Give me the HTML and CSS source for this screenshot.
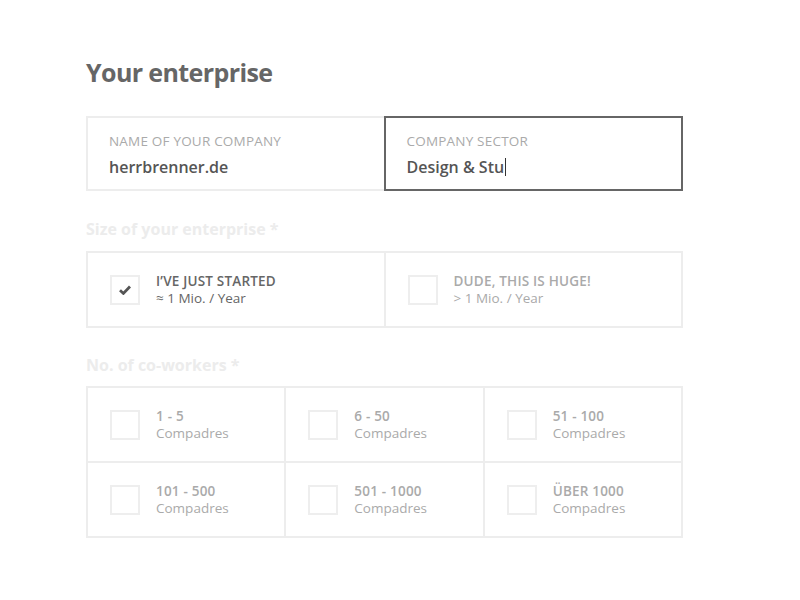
FILE: index.html
```html
<!DOCTYPE html>
<html lang="en">
<head>
  <meta charset="UTF-8">
  <meta name="viewport" content="width=device-width, initial-scale=1.0">
  <title>Your enterprise</title>
  <link rel="stylesheet" href="styles.css">
</head>
<body>
  <div class="form">
    <h1 class="title">Your enterprise</h1>

    <div class="row inputs">
      <div class="field">
        <div class="label">NAME OF YOUR COMPANY</div>
        <div class="value">herrbrenner.de</div>
      </div>
      <div class="field focused">
        <div class="label">COMPANY SECTOR</div>
        <div class="value">Design &amp; Stu<span class="caret"></span></div>
      </div>
    </div>

    <h2 class="section">Size of your enterprise *</h2>
    <div class="row size">
      <div class="option checked">
        <span class="box">
          <svg width="12" height="10" viewBox="0 0 12 10"><path d="M1 5.2 L4.4 8.4 L11 1.6" fill="none" stroke="#555" stroke-width="2.8"/></svg>
        </span>
        <div class="text">
          <div class="name">I’VE JUST STARTED</div>
          <div class="sub">≈ 1 Mio. / Year</div>
        </div>
      </div>
      <div class="option">
        <span class="box"></span>
        <div class="text">
          <div class="name">DUDE, THIS IS HUGE!</div>
          <div class="sub">&gt; 1 Mio. / Year</div>
        </div>
      </div>
    </div>

    <h2 class="section workers">No. of co-workers *</h2>
    <div class="grid">
      <div class="row">
        <div class="option"><span class="box"></span><div class="text"><div class="name">1 - 5</div><div class="sub">Compadres</div></div></div>
        <div class="option"><span class="box"></span><div class="text"><div class="name">6 - 50</div><div class="sub">Compadres</div></div></div>
        <div class="option"><span class="box"></span><div class="text"><div class="name">51 - 100</div><div class="sub">Compadres</div></div></div>
      </div>
      <div class="row">
        <div class="option"><span class="box"></span><div class="text"><div class="name">101 - 500</div><div class="sub">Compadres</div></div></div>
        <div class="option"><span class="box"></span><div class="text"><div class="name">501 - 1000</div><div class="sub">Compadres</div></div></div>
        <div class="option"><span class="box"></span><div class="text"><div class="name">ÜBER 1000</div><div class="sub">Compadres</div></div></div>
      </div>
    </div>
  </div>
</body>
</html>
```

FILE: styles.css
```css
body {
  margin: 0;
  background: #fff;
  font-family: "Open Sans", "Noto Sans", sans-serif;
  color: #666;
}

.form {
  width: 597px;
  margin-left: 86px;
  padding-top: 54px;
}

.title {
  margin: 0 0 26px;
  font-size: 25px;
  font-weight: 700;
  letter-spacing: -0.6px;
  line-height: 36px;
  color: #666;
}

.row {
  display: flex;
}

.row > div {
  flex: 1;
  box-sizing: border-box;
  border: 2px solid #ededed;
  position: relative;
}

.row > div + div {
  margin-left: -2px;
}

.field {
  height: 75px;
  padding: 15px 0 0 21px;
}

.field.focused {
  border-color: #666;
}

.label {
  font-size: 13.5px;
  line-height: 16px;
  color: #aaa;
  letter-spacing: 0.2px;
}

.value {
  margin-top: 8px;
  font-size: 16px;
  font-weight: 600;
  line-height: 20px;
  color: #555;
}

.caret {
  display: inline-block;
  width: 1px;
  height: 18px;
  background: #333;
  vertical-align: -3px;
  margin-left: 1px;
}

.section {
  margin: 26px 0 10px;
  font-size: 16px;
  font-weight: 700;
  line-height: 24px;
  color: #ececec;
}

.section.workers {
  margin: 25px 0 9px;
}

.option {
  height: 77px;
  display: flex;
  align-items: center;
  padding-left: 22px;
}

.grid .row + .row {
  margin-top: -2px;
}

.box {
  width: 30px;
  height: 30px;
  box-sizing: border-box;
  border: 2px solid #eee;
  display: flex;
  align-items: center;
  justify-content: center;
  margin-right: 16px;
  flex-shrink: 0;
}

.name {
  font-size: 13.5px;
  font-weight: 600;
  line-height: 17px;
  color: #aaa;
  letter-spacing: 0.2px;
}

.sub {
  font-size: 13.5px;
  line-height: 17px;
  color: #aaa;
}

.checked .name,
.checked .sub {
  color: #666;
}
```
